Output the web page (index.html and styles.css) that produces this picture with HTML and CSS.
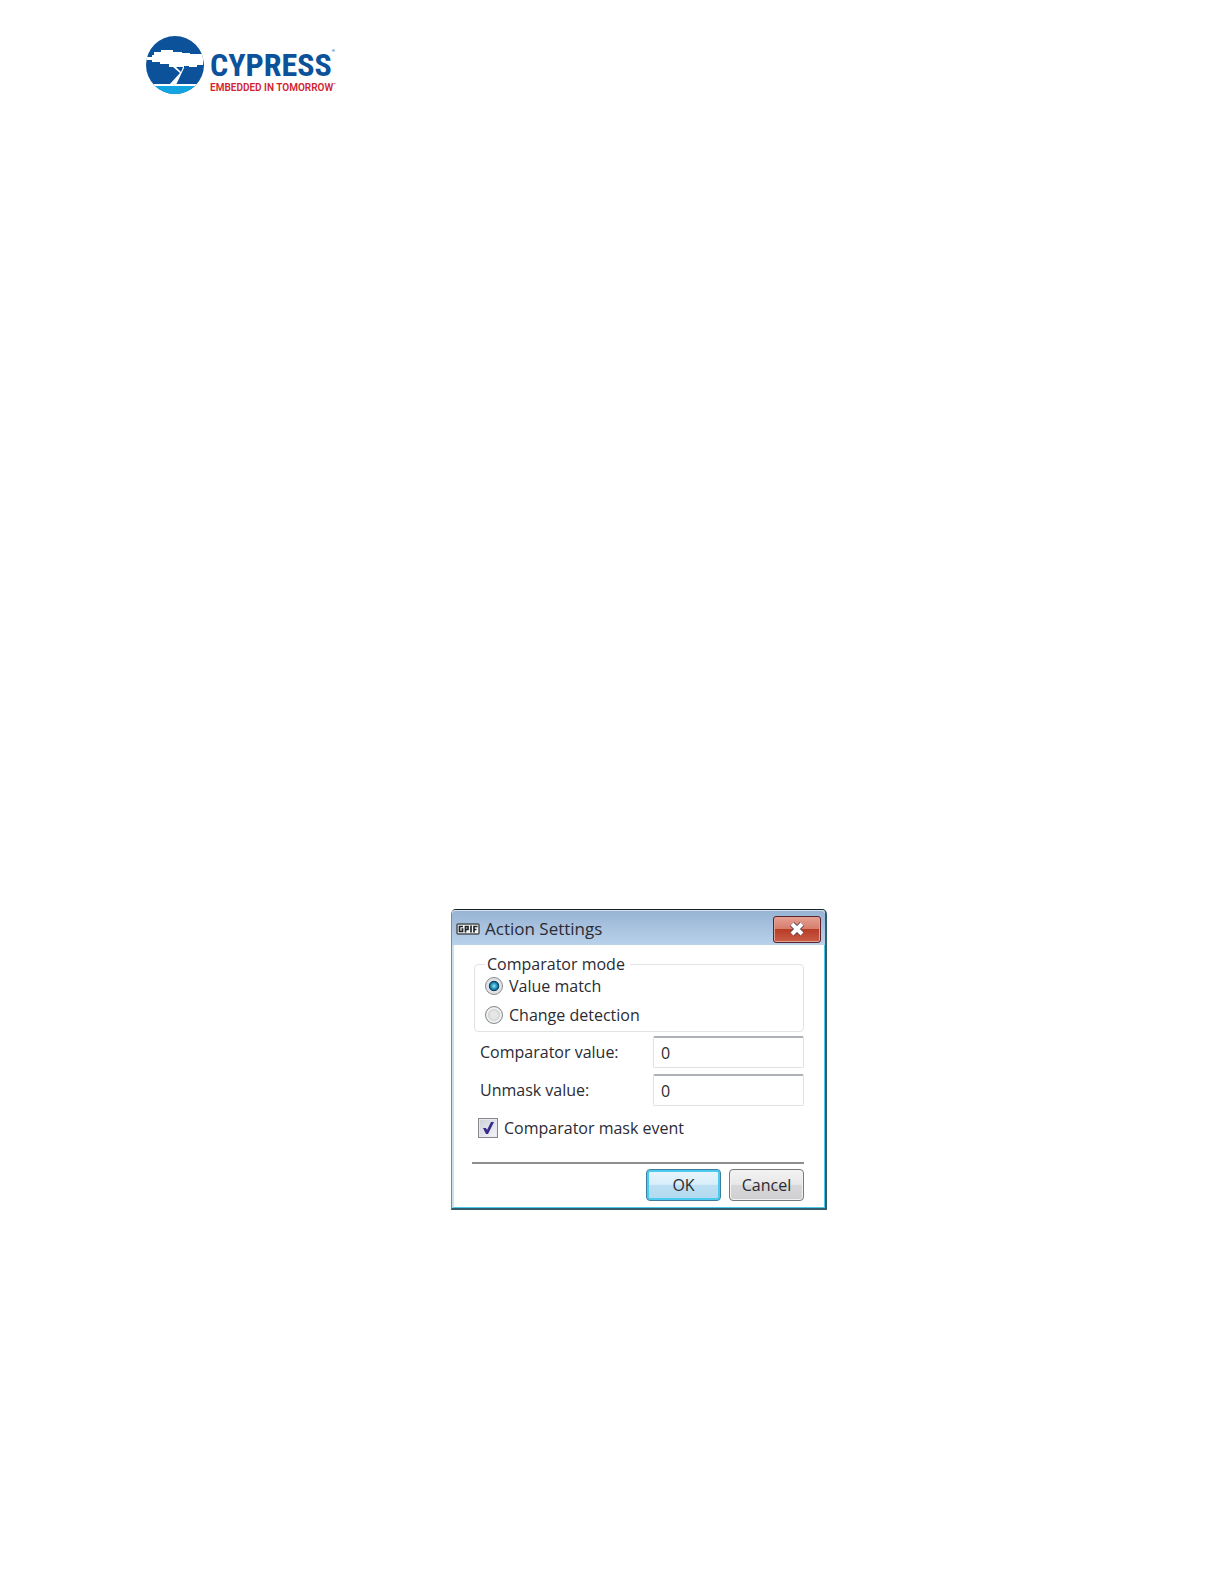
FILE: index.html
```
<!DOCTYPE html>
<html lang="en">
<head>
    <meta charset="UTF-8">
    <meta name="viewport" content="width=device-width, initial-scale=1.0">
    <title>Action Settings</title>
    <link rel="stylesheet" href="styles.css">
</head>
<body>
    <header class="page-header">
        <svg class="logo-mark" viewBox="0 0 60 60" aria-hidden="true">
            <defs>
                <clipPath id="disc"><circle cx="30" cy="30" r="29"/></clipPath>
            </defs>
            <g clip-path="url(#disc)">
                <rect width="60" height="60" fill="#0b529b"/>
                <rect y="51" width="60" height="9" fill="#12a5e2"/>
                <rect y="49" width="60" height="2" fill="#fff"/>
                <path fill="#fff" d="M0 22H7V20H9V17H16V15H28V17H37V18H45V19H60V26H58V30H52V32H44V31H39V33L31 50H24L35 38L28 32H24V29H15V27H7V25H0Z"/>
                <path fill="#0b529b" d="M31 32L36 37L38 32Z"/>
            </g>
        </svg>
        <div class="logo-text">
            <span class="logo-name">CYPRESS<sup>®</sup></span>
            <span class="logo-tagline">EMBEDDED IN TOMORROW<sup>™</sup></span>
        </div>
    </header>

    <main class="page-body">
        <form class="dialog" id="actionSettings">
            <div class="title-bar">
                <svg class="app-icon" viewBox="0 0 24 12" aria-hidden="true">
                    <rect x="1" y="1" width="22" height="10" rx="1" fill="#f4f5f5" stroke="#4a5254" stroke-width="1.5"/>
                    <path fill="none" stroke="#202628" stroke-width="1.7" d="M7 3.5H3.500V8.500H6.500V6H5.500M9.500 9.500V3.500H12V6.500H10M15 2.500V9.500M18 9.500V3.500H21.500M18 6.500H20.500"/>
                </svg>
                <h1>Action Settings</h1>
                <button type="button" class="close" aria-label="Close">
                    <svg viewBox="0 0 18 16" aria-hidden="true">
                        <path d="M4 3L14 13M14 3L4 13" stroke="#5d4550" stroke-width="6"/>
                        <path d="M4 3L14 13M14 3L4 13" stroke="#fff" stroke-width="4"/>
                    </svg>
                </button>
            </div>

            <div class="dialog-content">
                <fieldset>
                    <legend>Comparator mode</legend>
                    <div class="option">
                        <input type="radio" id="valueMatch" name="mode" checked>
                        <label for="valueMatch">Value match</label>
                    </div>
                    <div class="option">
                        <input type="radio" id="changeDetection" name="mode">
                        <label for="changeDetection">Change detection</label>
                    </div>
                </fieldset>

                <div class="form-row">
                    <label for="comparatorValue">Comparator value:</label>
                    <input type="text" id="comparatorValue" value="0">
                </div>
                <div class="form-row">
                    <label for="unmaskValue">Unmask value:</label>
                    <input type="text" id="unmaskValue" value="0">
                </div>

                <div class="check-row">
                    <span class="check">
                        <input type="checkbox" id="maskEvent" checked>
                        <svg viewBox="0 0 20 20" aria-hidden="true">
                            <path d="M5 10L8 10L9 12L13 4H16L10 16H8Z" fill="#352b8c"/>
                        </svg>
                    </span>
                    <label for="maskEvent">Comparator mask event</label>
                </div>

                <div class="actions">
                    <button type="submit" class="btn btn-default">OK</button>
                    <button type="button" class="btn">Cancel</button>
                </div>
            </div>
        </form>
    </main>
</body>
</html>
```
FILE: styles.css
```
* {
    margin: 0;
    padding: 0;
    box-sizing: border-box;
}

body {
    background: #fff;
    color: #2b2b33;
    font-family: "Open Sans", "Noto Sans", sans-serif;
    font-size: 16px;
    line-height: 20px;
    min-height: 100vh;
}

/* logo */
.page-header {
    display: flex;
    gap: 5px;
    padding: 35px 24px 0 145px;
}

.logo-mark {
    width: 60px;
    height: 60px;
}

.logo-text {
    display: flex;
    flex-direction: column;
    gap: 2px;
    padding-top: 14px;
    white-space: nowrap;
}

.logo-name {
    color: #0b529b;
    font-family: "Roboto Condensed", "Liberation Sans Narrow", Roboto, sans-serif;
    font-size: 32px;
    font-weight: 700;
    line-height: 32px;
}

.logo-tagline {
    color: #d2232f;
    font-family: Roboto, sans-serif;
    font-size: 10px;
    font-weight: 600;
    line-height: 10px;
}

.logo-text sup {
    font-size: 4px;
    line-height: 4px;
    vertical-align: top;
}

/* dialog window */
.page-body {
    display: flex;
    justify-content: center;
    padding: 814px 0 48px 54px;
}

.dialog {
    width: 376px;
    border: 1px solid #7d8c92;
    border-top-color: #17222b;
    border-right: 2px solid #315d6c;
    border-bottom: 2px solid #315d6c;
    border-radius: 5px 5px 0 0;
}

.title-bar {
    display: flex;
    align-items: center;
    height: 35px;
    padding: 2px 4px 0;
    background: linear-gradient(#98b4d4, #b9d1ea);
    border-top: 1px solid #d5dfe8;
    border-radius: 4px 4px 0 0;
}

.app-icon {
    width: 24px;
    height: 12px;
    margin-right: 5px;
}

.title-bar h1 {
    flex: 1;
    font-size: 17px;
    font-weight: 400;
}

.close {
    display: flex;
    align-items: center;
    justify-content: center;
    width: 48px;
    height: 27px;
    background: linear-gradient(#e5a093, #d67c6b 48%, #b83d27 50%, #cb5d49);
    border: 1px solid #5b2430;
    border-radius: 3px;
    box-shadow: inset 0 0 0 1px #e0a195;
}

.close svg {
    width: 18px;
    height: 16px;
}

.dialog-content {
    padding: 9px 20px 6px 18px;
    border: solid #4cc7e8;
    border-width: 0 1px 1px 0;
    border-left: 2px solid #cbdfed;
}

fieldset {
    height: 78px;
    margin-left: 2px;
    padding: 2px 10px 0;
    border: 1px solid #dfe3e6;
    border-radius: 4px;
}

legend {
    padding: 0 5px 0 2px;
}

.option {
    display: flex;
    align-items: center;
    gap: 6px;
    height: 20px;
    margin-bottom: 9px;
}

input[type="radio"] {
    appearance: none;
    width: 18px;
    height: 18px;
    background: radial-gradient(circle, #e6e6e6 30%, #c6c8ca 60%);
    border: 1px solid #858b8f;
    border-radius: 50%;
    box-shadow: inset 0 0 0 2px #f1f1f1;
}

input[type="radio"]:checked {
    background: radial-gradient(circle, #8fe3f7 0, #2b9cc4 24%, #123f60 42%, #e8ecee 50%);
    box-shadow: inset 0 0 0 2px #dfe3e5;
}

.form-row {
    display: flex;
    align-items: center;
    justify-content: space-between;
    margin-top: 6px;
    padding-left: 8px;
}

.form-row input {
    width: 151px;
    height: 32px;
    padding: 0 7px;
    color: #2b2b33;
    background: #fff;
    border: 1px solid #dfe2e5;
    border-top: 2px solid #adb0b4;
    border-radius: 2px;
    font: inherit;
}

fieldset + .form-row {
    margin-top: 4px;
}

.check-row {
    display: flex;
    align-items: center;
    gap: 6px;
    margin-top: 12px;
    padding-left: 6px;
}

.check {
    position: relative;
    width: 20px;
    height: 20px;
}

.check input {
    appearance: none;
    display: block;
    width: 20px;
    height: 20px;
    background: linear-gradient(135deg, #cdcfd8, #f4f4f8);
    border: 1px solid #85878c;
    box-shadow: inset 0 0 0 1px #e9e9ee;
}

/* tick sits over the box */
.check svg {
    position: absolute;
    inset: 0;
    opacity: 0;
    pointer-events: none;
}

.check input:checked + svg {
    opacity: 1;
}

.actions {
    display: flex;
    justify-content: flex-end;
    gap: 8px;
    margin-top: 24px;
    padding-top: 5px;
    border-top: 2px solid #8e8e90;
}

.btn {
    width: 75px;
    height: 32px;
    color: #2b2b33;
    background: linear-gradient(#f2f2f2, #e8e8e8 48%, #d8d8da 50%, #cfcfd1);
    border: 1px solid #77797b;
    border-radius: 4px;
    box-shadow: inset 0 0 0 1px #f2f2f2;
    font: inherit;
}

.btn-default {
    background: linear-gradient(#e9f5fc, #d8eefa 48%, #bcdff3 50%, #b2daf0);
    border-color: #3c7f9d;
    box-shadow: inset 0 0 0 2px #4ccaf0;
}
```
